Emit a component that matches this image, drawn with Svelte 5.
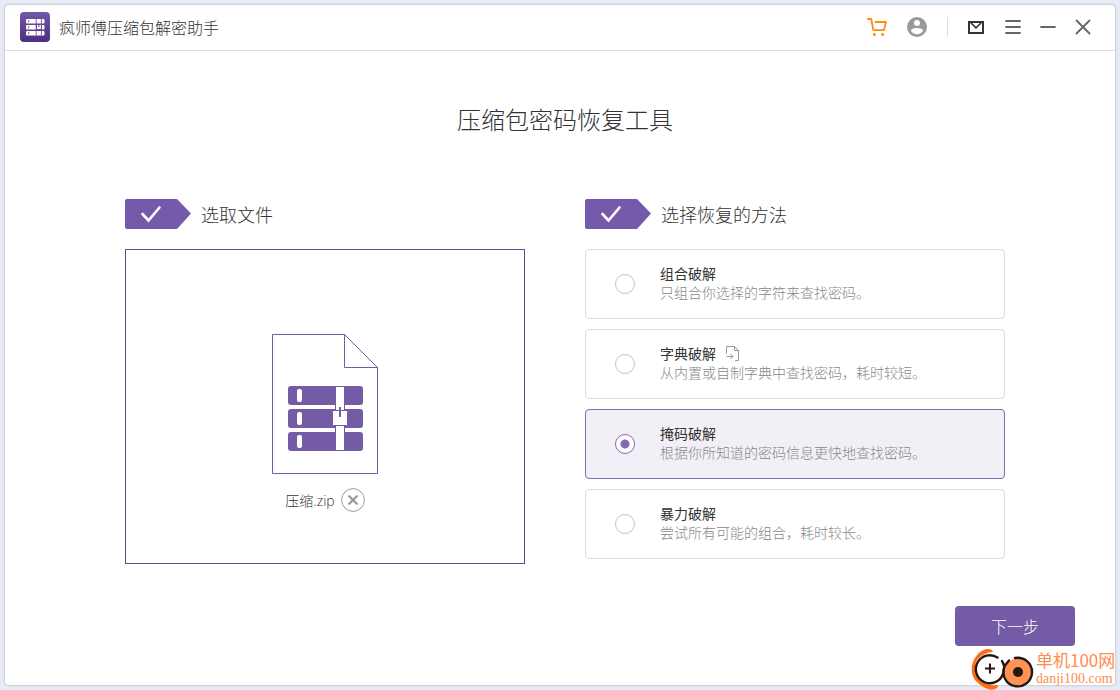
<script lang="ts">
  const methods = [
    { id: 'combo', name: '组合破解', desc: '只组合你选择的字符来查找密码。' },
    { id: 'dict', name: '字典破解', desc: '从内置或自制字典中查找密码，耗时较短。', importable: true },
    { id: 'mask', name: '掩码破解', desc: '根据你所知道的密码信息更快地查找密码。' },
    { id: 'brute', name: '暴力破解', desc: '尝试所有可能的组合，耗时较长。' }
  ]

  let selected = $state('mask')
  let fileName = $state('压缩.zip')
</script>

{#snippet step(label: string)}
  <h2 class="step">
    <svg width="66" height="30" viewBox="0 0 66 30" aria-hidden="true">
      <path d="M2,0 H52 L66,14.5 L52,30 H2 Q0,30 0,28 V2 Q0,0 2,0 Z" fill="#7559aa" />
      <path d="M17.5,15 L23.5,21.5 L34.5,8.5" fill="none" stroke="#fff" stroke-width="2.6" stroke-linecap="round" />
    </svg>
    {label}
  </h2>
{/snippet}

<div class="window">
  <header class="titlebar">
    <svg class="logo" width="30" height="30" viewBox="0 0 30 30" aria-hidden="true">
      <defs>
        <linearGradient id="logoGrad" x1="0" y1="0" x2="0" y2="1">
          <stop offset="0%" stop-color="#7358a8" />
          <stop offset="100%" stop-color="#4c2f80" />
        </linearGradient>
      </defs>
      <rect width="30" height="30" rx="4" fill="url(#logoGrad)" />
      {#each [7, 13, 19] as y}
        <rect x="6" {y} width="18.5" height="4.4" rx="1" fill="#fff" />
        <rect x="8.2" y={y + 0.8} width="1" height="2.8" fill="#8a76b4" />
      {/each}
      <path d="M16.2,7 V23.4 M21.4,7 V23.4" stroke="#6a4f9e" stroke-width="0.9" />
      <rect x="16.4" y="12.4" width="5" height="5" fill="#fff" stroke="#5b3f90" stroke-width="0.9" />
      <path d="M18.9,12 V15" stroke="#5b3f90" />
    </svg>
    <h1 class="app-name">疯师傅压缩包解密助手</h1>

    <div class="account">
      <button aria-label="购买">
        <svg viewBox="0 0 20 20" fill="none" stroke="#ff8a14" stroke-width="1.8" stroke-linecap="round" stroke-linejoin="round">
          <path d="M1,2 H4.2 L6.3,13.2 H17 L19,5 H8.5" />
          <circle cx="7.4" cy="17.4" r="1.5" fill="#ff8a14" stroke="none" />
          <circle cx="15.6" cy="17.4" r="1.5" fill="#ff8a14" stroke="none" />
        </svg>
      </button>
      <button aria-label="账户">
        <svg viewBox="0 0 20 20">
          <circle cx="10" cy="10" r="10" fill="#999" />
          <circle cx="10" cy="6" r="3" fill="#fff" />
          <path d="M4,14 C4,11.6 7,10.9 10,10.9 C13,10.9 16,11.6 16,14 C14.6,16 12.5,17.2 10,17.2 C7.5,17.2 5.4,16 4,14 Z" fill="#fff" />
        </svg>
      </button>
    </div>

    <div class="controls">
      <button aria-label="反馈">
        <svg viewBox="0 0 20 20" fill="none" stroke="#333" stroke-width="2">
          <path d="M4,5 H18 V16 H4 Z" />
          <path d="M6,6 L11,10.8 L16,6" stroke-width="1.6" />
        </svg>
      </button>
      <button aria-label="菜单">
        <svg viewBox="0 0 20 20" fill="none" stroke="#666" stroke-width="1.8" stroke-linecap="round">
          <path d="M5,4 H19 M5,10 H19 M5,16 H19" />
        </svg>
      </button>
      <button aria-label="最小化">
        <svg viewBox="0 0 20 20" fill="none" stroke="#666" stroke-width="1.8" stroke-linecap="round">
          <path d="M4,10 H18" />
        </svg>
      </button>
      <button aria-label="关闭">
        <svg viewBox="0 0 20 20" fill="none" stroke="#666" stroke-width="1.8" stroke-linecap="round">
          <path d="M3.5,3.5 L16.5,16.5 M16.5,3.5 L3.5,16.5" />
        </svg>
      </button>
    </div>
  </header>

  <main>
    <p class="headline">压缩包密码恢复工具</p>

    <div class="columns">
      <section>
        {@render step('选取文件')}
        <div class="dropzone">
          {#if fileName}
            <svg width="106" height="140" viewBox="0 0 106 140" aria-hidden="true">
              <path d="M0.5,0.5 H72.5 L105.5,33.5 V139.5 H0.5 Z M72.5,0.5 V33.5 H105.5" fill="none" stroke="#7559aa" />
              {#each [52, 75, 98] as y}
                <rect x="16" {y} width="75" height="19" rx="3" fill="#735ba5" />
                <rect x="25" y={y + 3} width="5" height="13" rx="2" fill="#fff" />
              {/each}
              <!-- zipper band and pull -->
              <rect x="63.5" y="52.5" width="9" height="64" fill="#fff" stroke="#735ba5" />
              <rect x="60.5" y="76.5" width="15" height="15" rx="1" fill="#fff" stroke="#735ba5" />
              <path d="M68,73 V83" stroke="#735ba5" stroke-width="2" />
            </svg>
            <div class="file">
              <span>{fileName}</span>
              <button class="remove" aria-label="移除文件" onclick={() => (fileName = '')}>
                <svg width="24" height="24" viewBox="0 0 24 24" fill="none">
                  <circle cx="12" cy="12" r="11.4" stroke="#999" />
                  <path d="M7.5,7.5 L16.5,16.5 M16.5,7.5 L7.5,16.5" stroke="#999" stroke-width="2.2" />
                </svg>
              </button>
            </div>
          {/if}
        </div>
      </section>

      <section>
        {@render step('选择恢复的方法')}
        <div class="methods">
          {#each methods as m (m.id)}
            <label class="method" class:active={selected === m.id}>
              <input type="radio" name="method" value={m.id} bind:group={selected} />
              <span class="text">
                <span class="name">
                  {m.name}
                  {#if m.importable}
                    <svg width="13" height="15" viewBox="0 0 13 15" fill="none" stroke="#999" aria-hidden="true">
                      <path d="M0.5,7.5 V0.5 H8.5 L12.5,4.5 V14.5 H9 M8.5,0.5 V4.5 H12.5" />
                      <path d="M0.5,10.5 H7 M4.5,8 L7,10.5 L4.5,13" />
                    </svg>
                  {/if}
                </span>
                <span class="desc">{m.desc}</span>
              </span>
            </label>
          {/each}
        </div>
      </section>
    </div>
  </main>

  <footer>
    <button class="next">下一步</button>
  </footer>
</div>

<a class="watermark" href="#danji100">
  <svg width="64" height="42" viewBox="0 0 64 42" fill="none" aria-hidden="true">
    <path d="M22,4 C20,-1 13,1 8,5 C-1,13 -2,28 7,35 C13,40 20,44 26,40 C27,39 27,38 26,37 C16,38 8,33 5,26 C1,15 8,5 22,4 Z" fill="#ff6d12" />
    <circle cx="19" cy="21" r="13.500" fill="#fff" />
    <path d="M26.5,9.5 A14,14 0 1 0 32,26" stroke="#231815" stroke-width="2.4" stroke-linecap="round" />
    <path d="M31,13 Q35,19 32,27" stroke="#231815" stroke-width="2.4" stroke-linecap="round" />
    <circle cx="47" cy="24" r="13.500" fill="#ff9350" />
    <path d="M44,10 A14.3,14.3 0 1 1 34,17.5 L38,12.5" stroke="#231815" stroke-width="2.4" stroke-linecap="round" />
    <path d="M14,20.5 H24 M19,15.5 V25.5" stroke="#231815" stroke-width="2" />
    <circle cx="47" cy="24" r="5" fill="#231815" />
  </svg>
  <span class="site">
    <span class="site-name">单机100网</span>
    <span class="site-url">danji100.com</span>
  </span>
</a>

<style>
  :global(body) {
    margin: 0;
    background: #e6ebf5;
    font-family: 'Noto Sans CJK SC', sans-serif;
    color: #333;
  }

  :global(#app) {
    position: relative;
    box-sizing: border-box;
    min-height: 100vh;
    padding: 5px;
    display: flex;
  }

  .window {
    flex: 1;
    min-width: 0;
    display: flex;
    flex-direction: column;
    background: #fff;
    border-radius: 4px;
    box-shadow: 0 0 2px 1px #c8ccd4;
  }

  button {
    display: flex;
    padding: 0;
    border: 0;
    background: none;
    font: inherit;
    cursor: pointer;
  }

  .titlebar {
    display: flex;
    align-items: center;
    height: 43px;
    padding: 0 22px 2px 15px;
    border-bottom: 1px solid #ddd;
  }

  .app-name {
    flex: 1;
    margin: 0 0 0 9px;
    font-size: 16px;
    font-weight: 300;
    line-height: 24px;
  }

  .account,
  .controls {
    display: flex;
  }

  .account {
    gap: 20px;
    padding-right: 20px;
    margin-right: 17px;
    border-right: 1px solid #ddd;
  }

  .controls {
    gap: 16px;
  }

  .titlebar button svg {
    width: 20px;
    height: 20px;
  }

  main {
    flex: 1;
    padding: 50px 110px 0 120px;
  }

  .headline {
    margin: 0 0 62px;
    text-align: center;
    font-size: 24px;
    font-weight: 300;
    line-height: 36px;
  }

  .columns {
    display: grid;
    grid-template-columns: 400fr 420fr;
    gap: 60px;
  }

  .step {
    display: flex;
    align-items: center;
    gap: 10px;
    height: 30px;
    margin: 0 0 20px;
    font-size: 18px;
    font-weight: 300;
  }

  .dropzone {
    box-sizing: border-box;
    display: flex;
    flex-direction: column;
    align-items: center;
    gap: 14px;
    min-height: 315px;
    padding-top: 84px;
    border: 1px solid #65498f;
  }

  .file {
    display: flex;
    align-items: center;
    gap: 6px;
    font-family: 'Open Sans', 'Noto Sans CJK SC', sans-serif;
    font-size: 14px;
    font-weight: 300;
  }

  .methods {
    display: grid;
    gap: 10px;
  }

  .method {
    box-sizing: border-box;
    display: flex;
    align-items: center;
    gap: 25px;
    min-height: 70px;
    padding: 14px 29px 16px;
    border: 1px solid #ddd;
    border-radius: 4px;
    cursor: pointer;
  }

  .method.active {
    border-color: #8567b8;
    background: #f2f0f7;
  }

  .method input {
    flex: none;
    appearance: none;
    width: 20px;
    height: 20px;
    margin: 2px 0 0;
    border: 1px solid #c4c4c4;
    border-radius: 50%;
    background: #fff;
  }

  .method input:checked {
    border-color: #8567b8;
    background: radial-gradient(circle, #8567b8 4px, #fff 5px);
  }

  .text {
    display: flex;
    flex-direction: column;
    font-size: 14px;
    line-height: 19px;
  }

  .name {
    display: flex;
    align-items: center;
    gap: 10px;
  }

  .desc {
    color: #888;
    font-weight: 300;
  }

  footer {
    display: flex;
    justify-content: flex-end;
    padding: 20px 40px 39px;
  }

  .next {
    justify-content: center;
    align-items: center;
    width: 120px;
    height: 40px;
    border-radius: 4px;
    background: #735ba5;
    color: #fff;
    font-size: 16px;
    font-weight: 300;
  }

  /* site badge over the corner of the window */
  .watermark {
    position: absolute;
    right: 2px;
    bottom: 0;
    display: flex;
    align-items: center;
    gap: 1px;
    color: #ff8c50;
    text-decoration: none;
  }

  .site {
    display: flex;
    flex-direction: column;
    width: 82px;
    white-space: nowrap;
  }

  .site-name {
    font-size: 17px;
    line-height: 20px;
  }

  .site-url {
    font-family: 'Liberation Serif', serif;
    font-size: 14px;
    line-height: 18px;
  }
</style>
